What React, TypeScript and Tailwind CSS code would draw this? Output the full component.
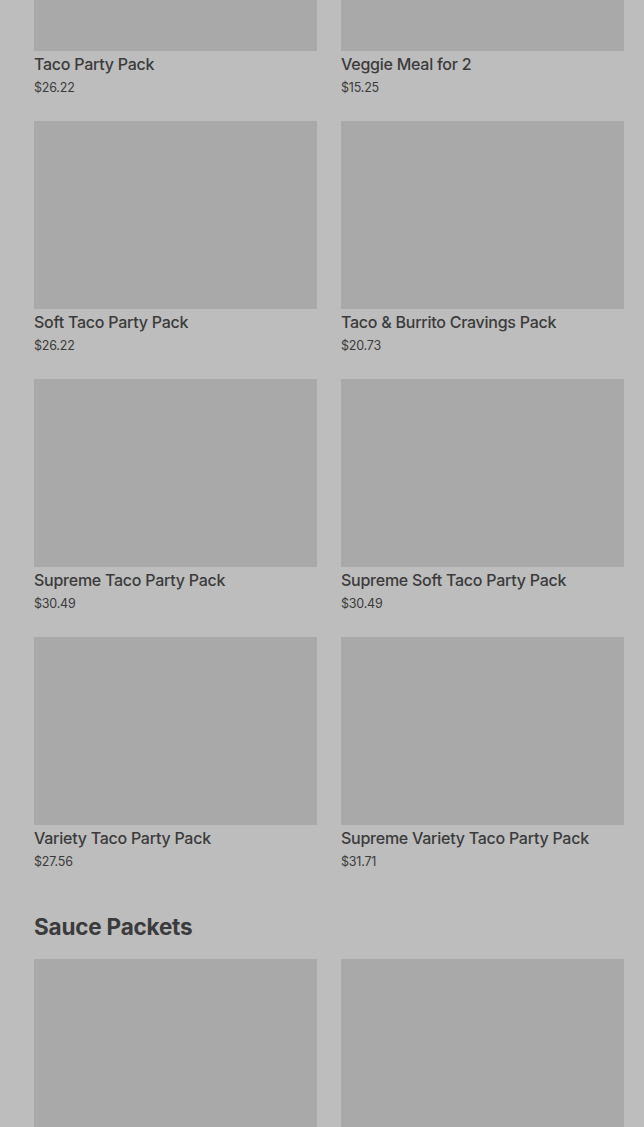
import React from 'react';

interface Item {
  name: string;
  price: string;
}

const partyPacks: Item[] = [
  { name: 'Taco Party Pack', price: '$26.22' },
  { name: 'Veggie Meal for 2', price: '$15.25' },
  { name: 'Soft Taco Party Pack', price: '$26.22' },
  { name: 'Taco & Burrito Cravings Pack', price: '$20.73' },
  { name: 'Supreme Taco Party Pack', price: '$30.49' },
  { name: 'Supreme Soft Taco Party Pack', price: '$30.49' },
  { name: 'Variety Taco Party Pack', price: '$27.56' },
  { name: 'Supreme Variety Taco Party Pack', price: '$31.71' },
];

const sauces: Item[] = [
  { name: 'Fire Sauce Packet', price: '$0.00' },
  { name: 'Hot Sauce Packet', price: '$0.00' },
];

const ItemCard: React.FC<{ item: Item }> = ({ item }) => (
  <div className="flex flex-col">
    <div className="h-[188px] bg-[#a9a9a9]" />
    <div className="pt-[1px] text-[16px] leading-[24px] font-medium text-[#3b3b3b] tracking-[-0.25px]">
      {item.name}
    </div>
    <div className="mt-[3px] text-[12.5px] leading-[18px] text-[#3b3b3b] tracking-[-0.2px]">
      {item.price}
    </div>
  </div>
);

export default function App() {
  return (
    <div
      className="min-h-[1127px] bg-[#bdbdbd]"
      style={{ fontFamily: 'Inter, "Noto Sans", sans-serif' }}
    >
      <div className="mt-[-137px] pl-[34px] pr-[20px] pb-[40px]">
        <div className="grid grid-cols-2 gap-x-[24px] gap-y-[24px]">
          {partyPacks.map((item) => (
            <ItemCard key={item.name} item={item} />
          ))}
        </div>

        <h2 className="mt-[42px] mb-[18px] text-[22.5px] leading-[28px] font-bold text-[#3b3b3b] tracking-[-0.2px]">
          Sauce Packets
        </h2>

        <div className="grid grid-cols-2 gap-x-[24px] gap-y-[24px]">
          {sauces.map((item) => (
            <ItemCard key={item.name} item={item} />
          ))}
        </div>
      </div>
    </div>
  );
}
